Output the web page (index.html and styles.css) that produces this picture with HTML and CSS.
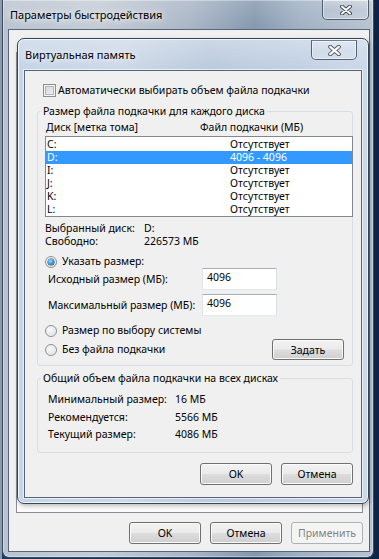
FILE: index.html
```
<!DOCTYPE html>
<html lang="ru">
<head>
<meta charset="utf-8">
<title>Параметры быстродействия</title>
<link rel="stylesheet" href="styles.css">
</head>
<body>
<div class="desk">
  <div class="outer">
    <div class="titlebar outer-title">
      <span class="title">Параметры быстродействия</span>
      <div class="close close-outer">
        <svg width="12" height="10" viewBox="0 0 12 10"><path d="M2 1.5 L10 8.5 M10 1.5 L2 8.5" stroke="#3d4654" stroke-width="3.8" stroke-linecap="round" fill="none"/><path d="M2 1.5 L10 8.5 M10 1.5 L2 8.5" stroke="#fff" stroke-width="2" stroke-linecap="round" fill="none"/></svg>
      </div>
    </div>
    <div class="outer-client">
      <div class="tabs"></div>
      <div class="tabpage"></div>
      <div class="btnrow outer-btns">
        <button class="btn">OK</button>
        <button class="btn">Отмена</button>
        <button class="btn" disabled>Применить</button>
      </div>
    </div>
  </div>

  <div class="inner">
    <div class="titlebar inner-title">
      <span class="title">Виртуальная память</span>
      <div class="close close-inner">
        <svg width="13" height="11" viewBox="0 0 13 11"><path d="M2.2 1.8 L10.8 9.2 M10.8 1.8 L2.2 9.2" stroke="#4a5360" stroke-width="4" stroke-linecap="round" fill="none"/><path d="M2.2 1.8 L10.8 9.2 M10.8 1.8 L2.2 9.2" stroke="#fff" stroke-width="2.2" stroke-linecap="round" fill="none"/></svg>
      </div>
    </div>
    <div class="inner-client">
      <div class="checkrow"><span class="check"></span><span>Автоматически выбирать объем файла подкачки</span></div>

      <fieldset class="group g1">
        <legend>Размер файла подкачки для каждого диска</legend>
        <div class="cols"><span>Диск [метка тома]</span><span>Файл подкачки (МБ)</span></div>
        <ul class="listbox">
          <li><span>C:</span><span>Отсутствует</span></li>
          <li class="sel"><span>D:</span><span>4096 - 4096</span></li>
          <li><span>I:</span><span>Отсутствует</span></li>
          <li><span>J:</span><span>Отсутствует</span></li>
          <li><span>K:</span><span>Отсутствует</span></li>
          <li><span>L:</span><span>Отсутствует</span></li>
        </ul>
        <div class="info">
          <div class="inforow"><span>Выбранный диск:</span><span>D:</span></div>
          <div class="inforow"><span>Свободно:</span><span>226573 МБ</span></div>
        </div>
        <div class="radiorow r-custom"><span class="radio on"></span><span>Указать размер:</span></div>
        <div class="field f1"><span class="flabel">Исходный размер (МБ):</span><input class="edit" type="text" value="4096"></div>
        <div class="field f2"><span class="flabel">Максимальный размер (МБ):</span><input class="edit" type="text" value="4096"></div>
        <div class="radiorow r-sys"><span class="radio"></span><span>Размер по выбору системы</span></div>
        <div class="lastrow">
          <div class="radiorow"><span class="radio"></span><span>Без файла подкачки</span></div>
          <button class="btn btn-set">Задать</button>
        </div>
      </fieldset>

      <fieldset class="group g2">
        <legend>Общий объем файла подкачки на всех дисках</legend>
        <div class="totrow"><span>Минимальный размер:</span><span>16 МБ</span></div>
        <div class="totrow"><span>Рекомендуется:</span><span>5566 МБ</span></div>
        <div class="totrow"><span>Текущий размер:</span><span>4086 МБ</span></div>
      </fieldset>

      <div class="btnrow inner-btns">
        <button class="btn">OK</button>
        <button class="btn">Отмена</button>
      </div>
    </div>
  </div>
</div>
</body>
</html>
```

FILE: styles.css
```
* { box-sizing: border-box; }
html, body { margin: 0; padding: 0; }
body {
  width: 379px;
  height: 559px;
  overflow: hidden;
  font-family: "Noto Sans", "Segoe UI", sans-serif;
  font-size: 10.5px;
  color: #000;
  background: linear-gradient(to right, #8d9aab 0, #8d9aab 2px, #1a3a62 2px, #0c2547 100%);
}
.desk { position: relative; width: 379px; height: 559px; }

/* ---------- outer window ---------- */
.outer {
  margin-left: 2px;
  width: 372px;
  height: 558px;
  border: 1px solid #3a4a5f;
  border-top: none;
  border-radius: 0 0 7px 7px;
  padding: 0 3px 5px 5px;
  display: flex;
  flex-direction: column;
  position: relative;
  background:
    linear-gradient(to bottom, rgba(255,255,255,0.18), rgba(255,255,255,0) 30px),
    linear-gradient(to right, #b9c3cf 0%, #c4ccd6 25%, #a9b6c6 50%, #8497ae 68%, #9fb0c3 80%, #b8c3d0 100%);
  box-shadow: inset 0 0 0 1px rgba(255,255,255,0.35);
}
.titlebar { display: flex; align-items: center; position: relative; flex: none; }
.outer-title { height: 29px; padding-left: 2px; }
.title {
  font-size: 11px;
  text-shadow: 0 0 6px rgba(255,255,255,0.95), 0 0 10px rgba(255,255,255,0.7);
}
.close {
  position: absolute;
  display: flex;
  align-items: center;
  justify-content: center;
  border: 1px solid rgba(45,55,72,0.75);
  border-top: none;
  border-radius: 0 0 5px 5px;
  background: linear-gradient(to bottom, rgba(255,255,255,0.28), rgba(255,255,255,0.08) 50%, rgba(255,255,255,0.18));
  box-shadow: inset 0 0 0 1px rgba(255,255,255,0.45);
}
.close-outer { top: 0; right: 1px; width: 47px; height: 20px; }
.close-inner { top: 1px; right: 5px; width: 46px; height: 20px; border-top: 1px solid rgba(45,55,72,0.6); border-radius: 0 0 5px 5px; }

.outer-client {
  flex: 1;
  border: 1px solid #56667b;
  background: #f0f0f0;
  display: flex;
  flex-direction: column;
  padding: 0 6px 0 7px;
}
.tabs { height: 22px; flex: none; }
.tabpage {
  height: 461px;
  flex: none;
  border: 1px solid #898c95;
  background: #fbfbfb;
}
.btnrow { display: flex; justify-content: flex-end; }
.outer-btns { margin-top: 9px; gap: 9px; }

/* ---------- buttons ---------- */
.btn {
  width: 72px;
  height: 22px;
  padding: 0;
  font-family: inherit;
  font-size: 10.5px;
  color: #000;
  border: 1px solid #707070;
  border-radius: 3px;
  background: linear-gradient(to bottom, #f2f2f2 0%, #ebebeb 48%, #dddddd 52%, #cfcfcf 100%);
  box-shadow: inset 0 0 0 1px #fbfbfb;
}
.btn:disabled {
  color: #838383;
  border-color: #adb2b5;
  background: #f4f4f4;
  box-shadow: none;
}

/* ---------- inner dialog ---------- */
.inner {
  position: absolute;
  left: 17px;
  top: 38px;
  width: 352px;
  height: 466px;
  border: 1px solid #34455c;
  border-radius: 7px;
  padding: 0 6px 5px 6px;
  display: flex;
  flex-direction: column;
  background:
    linear-gradient(to bottom, rgba(255,255,255,0.25), rgba(255,255,255,0) 28px),
    linear-gradient(to right, #c6d5e7 0%, #cdd9e8 30%, #bccbdd 55%, #c3d1e3 80%, #ccd9ea 100%);
  box-shadow: inset 0 0 0 1px rgba(255,255,255,0.7), 1px 2px 4px rgba(0,0,0,0.25);
}
.inner-title { height: 31px; padding-left: 1px; }
.inner-client {
  height: 428px;
  flex: none;
  border: 1px solid #56657a;
  background: #f0f0f0;
  display: flex;
  flex-direction: column;
  padding: 0 8px 0 12px;
  box-shadow: 0 0 0 1px rgba(255,255,255,0.6);
}

.checkrow {
  margin: 13px 0 0 6px;
  height: 13px;
  display: flex;
  align-items: center;
  gap: 2px;
  line-height: 13px;
}
.check {
  width: 13px;
  height: 13px;
  flex: none;
  border: 1px solid #8e8f8f;
  background: linear-gradient(135deg, #cbcfd5, #f6f6f6);
  box-shadow: inset 0 0 0 1px #f4f4f4, inset 0 0 0 2px #b3b8bf;
}

.group {
  margin: 7px 0 0 0;
  padding: 0 0 5px 0;
  border: 1px solid #d5dfe5;
  border-radius: 3px;
  min-width: 0;
}
.group legend {
  margin-left: 3px;
  padding: 0 2px;
  line-height: 15px;
  height: 15px;
}
.cols {
  display: grid;
  grid-template-columns: 154px auto;
  margin-left: 8px;
  height: 17px;
  line-height: 16px;
}
.listbox {
  list-style: none;
  margin: 0 -1px 0 7px;
  padding: 1px 0 0 0;
  height: 81px;
  border: 1px solid #828790;
  background: #fff;
}
.listbox li {
  height: 13px;
  line-height: 13px;
  display: grid;
  grid-template-columns: 183px auto;
  padding-left: 1px;
}
.listbox li.sel { background: #3399ff; color: #fff; }

.info { margin: 5px 0 0 7px; }
.inforow {
  display: grid;
  grid-template-columns: 99px auto;
  height: 13px;
  line-height: 13px;
}

.radiorow {
  display: flex;
  align-items: center;
  gap: 5px;
  height: 13px;
  line-height: 13px;
}
.radio {
  width: 12px;
  height: 12px;
  flex: none;
  border-radius: 50%;
  border: 1px solid #8b9097;
  background: radial-gradient(circle at 40% 35%, #fafafa 0%, #e6e8eb 55%, #cfd3d8 100%);
  box-shadow: inset 0 0 0 1px #f2f2f2;
  position: relative;
}
.radio.on::after {
  content: "";
  position: absolute;
  left: 2px;
  top: 2px;
  width: 6px;
  height: 6px;
  border-radius: 50%;
  background: radial-gradient(circle at 40% 35%, #9fe1ff 0%, #3aa3e8 45%, #15508e 100%);
  box-shadow: 0 0 0 0.5px #1a3f66;
}
.r-custom { margin: 7px 0 0 7px; }
.field {
  display: flex;
  align-items: center;
  height: 22px;
  margin-left: 10px;
}
.flabel { width: 154px; flex: none; white-space: nowrap; }
.f2 { margin-top: 4px; }
.edit {
  width: 75px;
  height: 22px;
  padding: 0 3px 4px 4px;
  font-family: inherit;
  font-size: 10.5px;
  color: #000;
  background: #fff;
  border: 1px solid #abadb3;
  border-left-color: #e2e3ea;
  border-right-color: #dbdfe6;
  border-bottom-color: #e3e9ef;
  outline: none;
}
.r-sys { margin: 8px 0 0 7px; }
.lastrow {
  display: flex;
  align-items: center;
  justify-content: space-between;
  height: 21px;
  margin: 2px 8px 0 7px;
}
.btn-set { width: 72px; height: 21px; }

.g2 { margin-top: 5px; padding: 5px 0 8px 0; }
.totrow {
  display: grid;
  grid-template-columns: 127px auto;
  margin-left: 10px;
  height: 17.5px;
  line-height: 17.5px;
}
.inner-btns { margin-top: 10px; gap: 9px; }
```
